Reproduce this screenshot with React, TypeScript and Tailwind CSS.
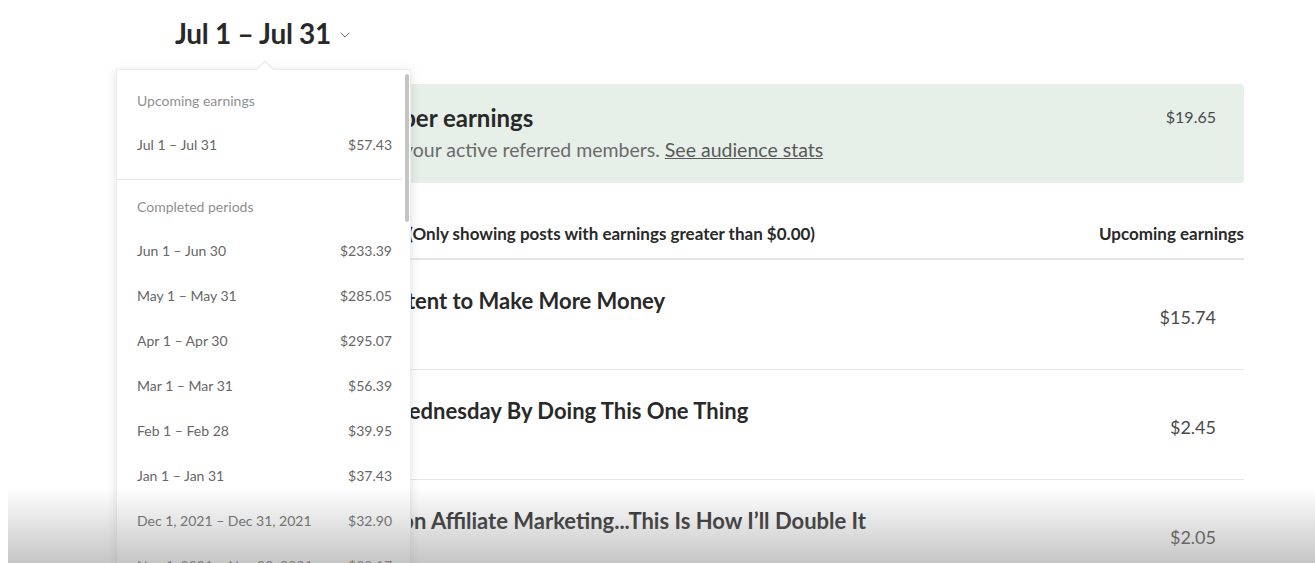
import { ChevronDown } from "lucide-react";

const upcoming = { label: "Jul 1 – Jul 31", amount: "$57.43" };

const completed = [
  { label: "Jun 1 – Jun 30", amount: "$233.39" },
  { label: "May 1 – May 31", amount: "$285.05" },
  { label: "Apr 1 – Apr 30", amount: "$295.07" },
  { label: "Mar 1 – Mar 31", amount: "$56.39" },
  { label: "Feb 1 – Feb 28", amount: "$39.95" },
  { label: "Jan 1 – Jan 31", amount: "$37.43" },
  { label: "Dec 1, 2021 – Dec 31, 2021", amount: "$32.90" },
  { label: "Nov 1, 2021 – Nov 30, 2021", amount: "$28.17" },
];

const posts = [
  { title: "How I Recycle Your Content to Make More Money", amount: "$15.74" },
  { title: "How I Get Paid Every Wednesday By Doing This One Thing", amount: "$2.45" },
  { title: "I Earned $1,500 in July on Affiliate Marketing...This Is How I’ll Double It", amount: "$2.05" },
];

function PeriodRow({ label, amount }: { label: string; amount: string }) {
  return (
    <div className="flex items-center justify-between h-[45px] text-[14px] text-[#666]">
      <span>{label}</span>
      <span>{amount}</span>
    </div>
  );
}

export default function App() {
  return (
    <div
      className="relative w-[1315px] h-[563px] overflow-hidden bg-white text-[#292929]"
      style={{ fontFamily: "Lato, 'Open Sans', sans-serif" }}
    >
      <div className="pl-[175px] pt-[12px] pr-[71px]">
        <div className="flex items-center gap-1.5 h-[42px]">
          <h1 className="text-[28px] font-bold tracking-[-0.3px]">Jul 1 – Jul 31</h1>
          <ChevronDown className="w-4 h-4 text-[#757575] mt-1" strokeWidth={1.5} />
        </div>

        <div className="mt-[30px] flex justify-between bg-[#e6f0e8] rounded-sm h-[99px] pl-[76px] pr-[28px] pt-[20px]">
          <div>
            <h2 className="text-[24px] font-bold leading-[28px]">Referred member earnings</h2>
            <p className="mt-[5px] ml-[5px] text-[19.5px] leading-[26px] text-[#6b6b6b]">
              Earnings from all your active referred members.{" "}
              <span className="underline text-[#5a5a5a]">See audience stats</span>
            </p>
          </div>
          <div className="text-[16px] leading-[24px] text-[#4a4a4a] pt-[1px]">$19.65</div>
        </div>

        <div className="mt-[39px] flex justify-between text-[17px] leading-[24px] font-bold pb-[12px] border-b-2 border-[#e4e4e4]">
          <span className="-ml-[3px]">Earnings by story in this period (Only showing posts with earnings greater than $0.00)</span>
          <span>Upcoming earnings</span>
        </div>

        {posts.map((p, i) => (
          <div
            key={p.title}
            className={`flex justify-between items-start h-[110px] pt-[27px] ${i < posts.length - 1 ? "border-b border-[#e6e6e6]" : ""}`}
          >
            <h3 className="text-[22px] leading-[28px] font-bold">{p.title}</h3>
            <span className="mt-[17px] text-[18px] leading-[26px] text-[#4a4a4a] pr-[28px]">{p.amount}</span>
          </div>
        ))}
      </div>

      {/* period dropdown */}
      <div className="absolute left-[116px] top-[69px] w-[295px] h-[520px] bg-white border border-[#ececec] shadow-[0_2px_10px_rgba(0,0,0,0.12)]">
        <div className="absolute -top-[7px] left-[142px] w-3 h-3 rotate-45 bg-white border-l border-t border-[#e6e6e6]" />
        <div className="absolute right-[1px] top-[4px] w-[4px] h-[148px] rounded bg-[#c4c4c4]" />
        <div className="pl-[20px] pr-[18px] pt-[19px] pb-[12px] border-b border-[#e6e6e6] mr-[8px]">
          <div className="text-[14px] leading-[24px] text-[#8f8f8f]">Upcoming earnings</div>
          <div className="mt-[9px] -mr-[8px]">
            <PeriodRow {...upcoming} />
          </div>
        </div>
        <div className="pl-[20px] pr-[18px] pt-[15px]">
          <div className="text-[14px] leading-[24px] text-[#8f8f8f]">Completed periods</div>
          <div className="mt-[9px]">
            {completed.map((c) => (
              <PeriodRow key={c.label} {...c} />
            ))}
          </div>
        </div>
      </div>

      {/* video-style fade at the bottom */}
      <div className="absolute left-[8px] right-0 bottom-0 h-[75px] bg-gradient-to-b from-transparent to-[rgba(150,150,150,0.55)] pointer-events-none" />
    </div>
  );
}
